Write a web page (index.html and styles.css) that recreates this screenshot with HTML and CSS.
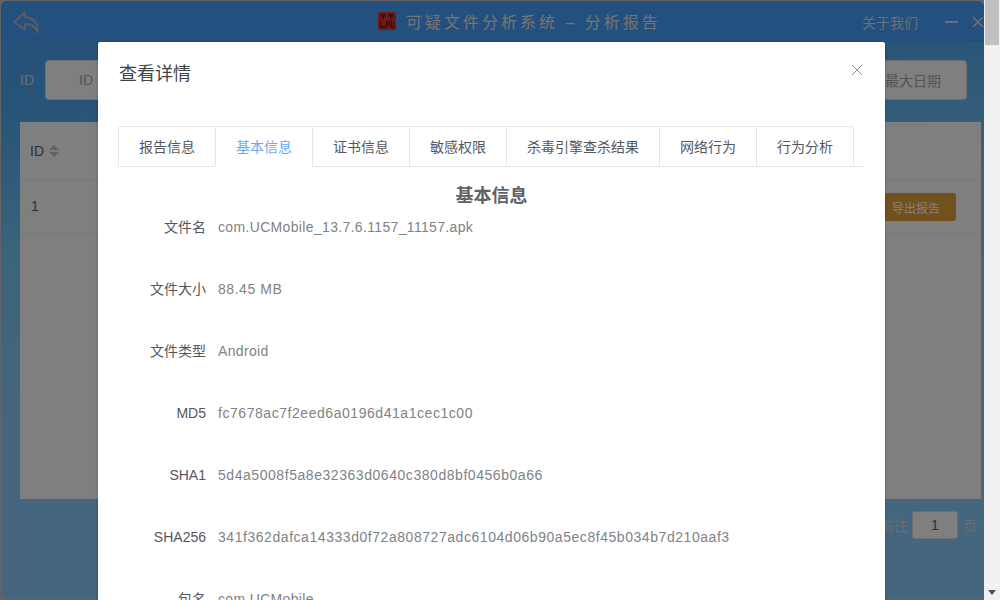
FILE: index.html
```html
<!DOCTYPE html>
<html lang="zh">
<head>
    <meta charset="UTF-8">
    <title>可疑文件分析系统 - 分析报告</title>
    <link rel="stylesheet" href="styles.css">
</head>
<body>
    <div class="window">
        <div class="app">
            <header class="topbar">
                <svg class="back-icon" width="28" height="24" viewBox="0 0 28 24">
                    <path d="M13 2.500 2 12l11 7.500v-5c5-1 9 .5 12.500 7 .5-7-3-13-12.500-14.500z"/>
                </svg>
                <div class="app-title">
                    <svg class="logo" width="18" height="18" viewBox="0 0 18 18">
                        <rect width="18" height="18" fill="#d63434"/>
                        <path d="M3 2h4v3H6v2H5V5H3zM11 2h4v3h-2v2h-1V5h-1zM2 9h1v5h5v2H2zM8 9h2v5H8zM11 8h1v7h-1zM13 8h1v7h-1zM15 9h1v7h-3v-1h2z" fill="#7a1414"/>
                    </svg>
                    <span>可疑文件分析系统 – 分析报告</span>
                </div>
                <div class="top-actions">
                    <span class="about">关于我们</span>
                    <span class="win-min"></span>
                    <svg class="win-close" width="12" height="12" viewBox="0 0 12 12">
                        <path d="M1 1l10 10M11 1 1 11"/>
                    </svg>
                </div>
            </header>
            <section class="filters">
                <span class="filter-label">ID</span>
                <div class="fake-input id-input">ID</div>
                <div class="fake-input date-input">最大日期</div>
            </section>
            <section class="table">
                <div class="table-head">
                    <span>ID</span>
                    <span class="sort"><i class="caret-up"></i><i class="caret-down"></i></span>
                </div>
                <div class="table-row">
                    <span class="cell-id">1</span>
                    <button class="export-btn">导出报告</button>
                </div>
            </section>
            <footer class="pager">
                <span>前往</span>
                <div class="pager-input">1</div>
                <span>页</span>
            </footer>
        </div>
        <div class="overlay"></div>
        <div class="dialog">
            <div class="dialog-head">
                <span class="dialog-title">查看详情</span>
                <svg class="dialog-close" width="12" height="12" viewBox="0 0 12 12">
                    <path d="M1 1l10 10M11 1 1 11"/>
                </svg>
            </div>
            <div class="tabs">
                <div class="tab-list">
                    <div class="tab">报告信息</div>
                    <div class="tab active">基本信息</div>
                    <div class="tab">证书信息</div>
                    <div class="tab">敏感权限</div>
                    <div class="tab">杀毒引擎查杀结果</div>
                    <div class="tab">网络行为</div>
                    <div class="tab">行为分析</div>
                </div>
            </div>
            <h3 class="section-title">基本信息</h3>
            <div class="info-row"><label>文件名</label><div class="value">com.UCMobile_13.7.6.1157_11157.apk</div></div>
            <div class="info-row"><label>文件大小</label><div class="value hash">88.45 MB</div></div>
            <div class="info-row"><label>文件类型</label><div class="value">Android</div></div>
            <div class="info-row"><label>MD5</label><div class="value hash">fc7678ac7f2eed6a0196d41a1cec1c00</div></div>
            <div class="info-row"><label>SHA1</label><div class="value hash">5d4a5008f5a8e32363d0640c380d8bf0456b0a66</div></div>
            <div class="info-row"><label>SHA256</label><div class="value hash">341f362dafca14333d0f72a808727adc6104d06b90a5ec8f45b034b7d210aaf3</div></div>
            <div class="info-row"><label>包名</label><div class="value">com.UCMobile</div></div>
        </div>
        <div class="scrollbar">
            <div class="scroll-thumb"></div>
            <i class="scroll-down"></i>
        </div>
    </div>
</body>
</html>
```

FILE: styles.css
```css
* {
    box-sizing: border-box;
}
html, body {
    height: 100%;
    margin: 0;
    overflow: hidden;
}
body {
    font-family: "Liberation Sans", "Noto Sans CJK SC", sans-serif;
    font-size: 14px;
    color: #606266;
    background-color: #c9c9c9;
}
.window {
    position: relative;
    height: 600px;
    padding-top: 1px;
    display: flex;
    overflow: hidden;
}
.app {
    width: 983px;
    margin-left: 1px;
    height: 598px;
    border-radius: 6px;
    overflow: hidden;
    background: linear-gradient(175deg, #4a9ff8 0, #4fa8f0 110px, #78c8f8 260px, #88ccfc 420px, #88cdfe 100%);
}
.topbar {
    height: 41px;
    background-color: #46a0ff;
    display: flex;
    align-items: center;
    position: relative;
    padding: 0 0 0 11px;
    color: #fff;
}
.back-icon {
    fill: none;
    stroke: #bbb;
    stroke-width: 1.8;
}
.app-title {
    position: absolute;
    left: 377px;
    top: 8px;
    display: flex;
    align-items: center;
    gap: 10px;
    font-size: 16px;
    letter-spacing: 3px;
    color: #e8e8e8;
}
.top-actions {
    margin-left: auto;
    display: flex;
    align-items: center;
    color: #ddd;
}
.about {
    margin-right: 27px;
}
.win-min {
    width: 13px;
    height: 2px;
    background-color: #ddd;
    margin-right: 14px;
}
.win-close {
    stroke: #ddd;
    stroke-width: 1.6;
}
.filters {
    height: 40px;
    margin-top: 18px;
    padding: 0 17px 0 19px;
    display: flex;
    align-items: center;
    color: #dcdcdc;
}
.filter-label {
    width: 25px;
}
.fake-input {
    height: 40px;
    background-color: #fff;
    border-radius: 4px;
    border: 1px solid #dcdfe6;
    color: #aaa;
    display: flex;
    align-items: center;
}
.id-input {
    width: 200px;
    padding-left: 33px;
}
.date-input {
    width: 120px;
    margin-left: auto;
    padding-left: 37px;
}
.table {
    margin: 22px 3px 0 19px;
    height: 377px;
    background-color: #fff;
}
.table-head {
    height: 59px;
    padding-left: 10px;
    border-bottom: 1px solid #ebeef5;
    display: flex;
    align-items: center;
    gap: 5px;
    color: #5c5e62;
}
.sort {
    display: flex;
    flex-direction: column;
    gap: 2px;
}
.caret-up, .caret-down {
    width: 0;
    height: 0;
    border-left: 5px solid transparent;
    border-right: 5px solid transparent;
}
.caret-up {
    border-bottom: 5px solid #c0c4cc;
}
.caret-down {
    border-top: 5px solid #c0c4cc;
}
.table-row {
    height: 53px;
    padding: 0 25px 0 11px;
    border-bottom: 1px solid #ebeef5;
    display: flex;
    align-items: center;
    justify-content: space-between;
}
.cell-id {
    margin-top: -2px;
}
.export-btn {
    width: 80px;
    height: 28px;
    border: 0;
    border-radius: 3px;
    font-family: inherit;
    font-size: 12px;
    color: #fff;
    background-color: #e6a23c;
}
.pager {
    margin-top: 12px;
    padding-right: 7px;
    height: 28px;
    display: flex;
    justify-content: flex-end;
    align-items: center;
    color: #dcdcdc;
}
.pager-input {
    width: 46px;
    height: 28px;
    margin: 0 5px 0 4px;
    background-color: #fff;
    border: 1px solid #dcdfe6;
    border-radius: 3px;
    color: #606266;
    display: flex;
    align-items: center;
    justify-content: center;
}
.overlay {
    position: absolute;
    inset: 0 16px 0 0;
    background-color: rgba(0, 0, 0, 0.5);
}
.dialog {
    position: absolute;
    left: 98px;
    top: 42px;
    width: 787px;
    height: 600px;
    padding: 0 20px;
    background-color: #fff;
    border-radius: 2px;
    box-shadow: 0 1px 3px rgba(0, 0, 0, 0.3);
}
.dialog-head {
    height: 84px;
    padding: 19px 0 0 1px;
    display: flex;
    justify-content: space-between;
    align-items: flex-start;
}
.dialog-title {
    font-size: 18px;
    line-height: 26px;
    color: #404246;
}
.dialog-close {
    stroke: #909399;
    stroke-width: 1;
    margin-top: 3px;
    margin-right: 2px;
}
.tabs {
    border-bottom: 1px solid #e4e7ed;
    height: 41px;
}
.tab-list {
    display: inline-flex;
    border: 1px solid #e4e7ed;
    border-bottom: 0;
    border-radius: 4px 4px 0 0;
    height: 41px;
}
.tab {
    padding: 0 20px;
    line-height: 40px;
    color: #55575c;
    border-left: 1px solid #e4e7ed;
    border-bottom: 1px solid #e4e7ed;
}
.tab:first-child {
    border-left: 0;
}
.tab.active {
    color: #6aa8f5;
    border-bottom-color: #fff;
}
.section-title {
    margin: 0;
    padding-top: 17px;
    height: 40px;
    line-height: 24px;
    font-size: 18px;
    font-weight: 700;
    text-align: center;
    color: #606266;
}
.info-row {
    display: flex;
    height: 40px;
    margin-bottom: 22px;
    line-height: 40px;
}
.info-row label {
    width: 100px;
    padding-right: 12px;
    text-align: right;
    color: #55575c;
}
.value {
    color: #808286;
    letter-spacing: 0.34px;
}
.value.hash {
    letter-spacing: 0.55px;
}
.scrollbar {
    position: absolute;
    top: 0;
    right: 0;
    bottom: 0;
    width: 16px;
    background-color: #f1f1f1;
}
.scroll-thumb {
    height: 45px;
    margin: 0 1px;
    background-color: #c1c1c1;
}
.scroll-down {
    position: absolute;
    left: 4px;
    bottom: 5px;
    border-left: 4px solid transparent;
    border-right: 4px solid transparent;
    border-top: 5px solid #505050;
}
```
